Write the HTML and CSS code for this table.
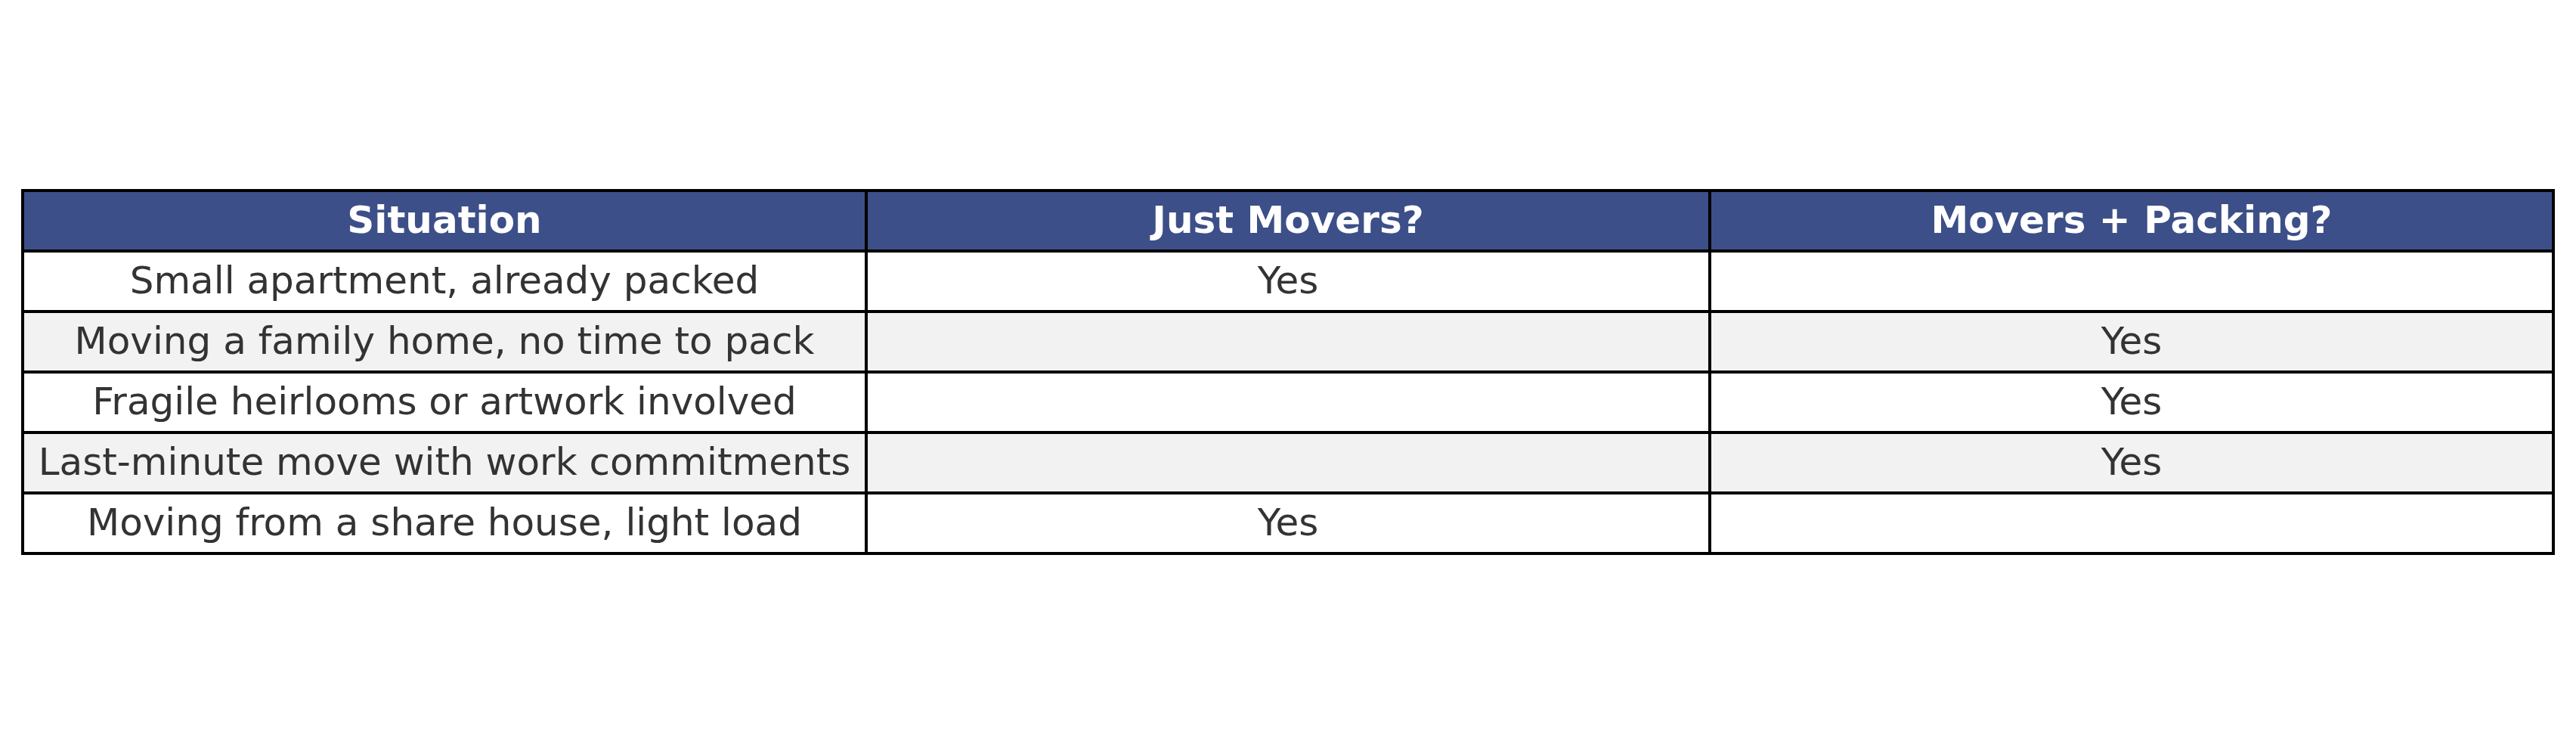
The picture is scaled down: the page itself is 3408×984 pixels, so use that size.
FILE: index.html
```html
<!DOCTYPE html>
<html lang="en">
<head>
<meta charset="utf-8">
<title>Movers comparison</title>
<link rel="stylesheet" href="styles.css">
</head>
<body>
<div class="page">
  <table class="compare">
    <colgroup><col class="c"><col class="c"><col class="c"></colgroup>
    <thead>
      <tr><th>Situation</th><th>Just Movers?</th><th>Movers + Packing?</th></tr>
    </thead>
    <tbody>
      <tr><td>Small apartment, already packed</td><td>Yes</td><td></td></tr>
      <tr class="alt"><td>Moving a family home, no time to pack</td><td></td><td>Yes</td></tr>
      <tr><td>Fragile heirlooms or artwork involved</td><td></td><td>Yes</td></tr>
      <tr class="alt"><td>Last-minute move with work commitments</td><td></td><td>Yes</td></tr>
      <tr><td>Moving from a share house, light load</td><td>Yes</td><td></td></tr>
    </tbody>
  </table>
</div>
</body>
</html>
```

FILE: styles.css
```css
html, body {
  margin: 0;
  padding: 0;
  background: #ffffff;
}
.page {
  padding: 250px 28px 0 28px;
  font-family: "DejaVu Sans", "Liberation Sans", sans-serif;
}
.compare {
  width: 3352px;
  table-layout: fixed;
  border-collapse: separate;
  border-spacing: 4px;
  background: #000000;
}
.compare .c {
  width: 1112px;
}
.compare th,
.compare td {
  height: 76px;
  padding: 0 0 2px 0;
  box-sizing: border-box;
  text-align: center;
  vertical-align: middle;
  font-size: 50px;
  line-height: 58px;
  white-space: nowrap;
}
.compare th {
  background: #3d4f88;
  color: #ffffff;
  font-weight: bold;
}
.compare td {
  background: #ffffff;
  color: #333333;
  font-weight: normal;
}
.compare tr.alt td {
  background: #f2f2f2;
}
```
